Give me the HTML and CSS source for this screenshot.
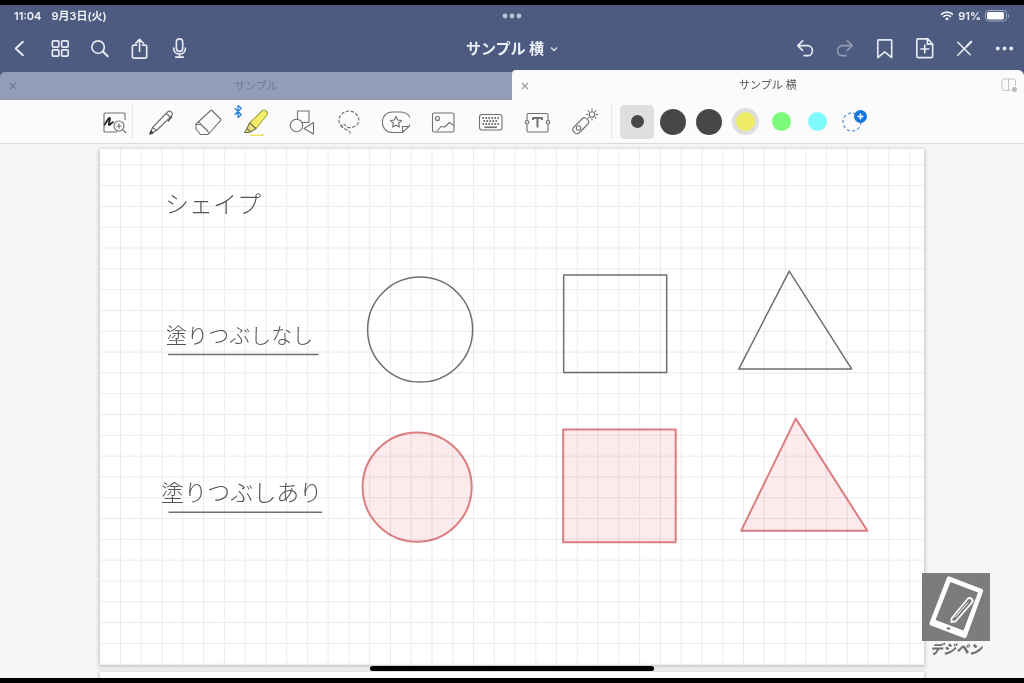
FILE: index.html
```html
<!DOCTYPE html>
<html lang="ja">
<head>
<meta charset="utf-8">
<meta name="viewport" content="width=device-width, initial-scale=1">
<title>サンプル 横</title>
<link rel="stylesheet" href="styles.css">
</head>
<body>
<div class="app">
  <header class="top">
    <div class="status">
      <div class="status-left"><span>11:04</span><span>9月3日(火)</span></div>
      <svg class="dots" viewBox="0 0 20 6" width="20" height="6"><circle cx="3" cy="3" r="2.400"/><circle cx="10" cy="3" r="2.400"/><circle cx="17" cy="3" r="2.400"/></svg>
      <div class="status-right">
        <svg viewBox="0 0 14 10" width="14" height="10" fill="none" stroke="#f4f6fa" stroke-width="1.700"><path d="M1 3.600C4.400.4 9.600.4 13 3.600M3.200 5.900c2.200-2 5.400-2 7.600 0"/><path d="M7 9.600 5 7.600c1.200-1 2.800-1 4 0z" fill="#f4f6fa" stroke="none"/></svg>
        <span>91%</span>
        <svg viewBox="0 0 25 12" width="25" height="12"><rect x=".5" y=".5" width="21" height="10.500" rx="3.200" fill="none" stroke="#a2abc2"/><rect x="2" y="2" width="17" height="7.500" rx="1.800" fill="#fff"/><path d="M23 4v4c1.500-.7 1.500-3.300 0-4z" fill="#a2abc2"/></svg>
      </div>
    </div>
    <nav class="nav">
      <div class="nav-group">
        <button class="nav-btn" aria-label="戻る"><svg class="ico" viewBox="0 0 24 24"><path d="M14.500 5 7 12l7.500 7" stroke-width="2"/></svg></button>
        <button class="nav-btn" aria-label="一覧"><svg class="ico" viewBox="0 0 24 24"><rect x="3.500" y="4" width="6.800" height="6.500" rx="1"/><rect x="13.200" y="4" width="6.800" height="6.500" rx="1"/><rect x="3.500" y="13.500" width="6.800" height="6.500" rx="1"/><rect x="13.200" y="13.500" width="6.800" height="6.500" rx="1"/></svg></button>
        <button class="nav-btn" aria-label="検索"><svg class="ico" viewBox="0 0 24 24"><circle cx="9.500" cy="10.500" r="6.500"/><path d="m14.500 15.200 5 4.800" stroke-width="2.200"/></svg></button>
        <button class="nav-btn" aria-label="共有"><svg class="ico" viewBox="0 0 24 24"><path d="M8 8.500H5.500a2 2 0 0 0-2 2V20a2 2 0 0 0 2 2h11a2 2 0 0 0 2-2v-9.500a2 2 0 0 0-2-2H14M11 15V3M7 6.500l4-4 4 4"/></svg></button>
        <button class="nav-btn" aria-label="録音"><svg class="ico" viewBox="0 0 24 24"><rect x="7.700" y="2" width="6.600" height="13" rx="3.300"/><path d="M4.800 11.500c0 8.500 12.400 8.500 12.400 0M11 18v3M7 21h8"/></svg></button>
      </div>
      <button class="title">サンプル 横<svg viewBox="0 0 8 6" width="8" height="6"><path d="m1 1.500 3 3 3-3" fill="none" stroke="#dfe3ed" stroke-width="1.300"/></svg></button>
      <div class="nav-group end">
        <button class="nav-btn" aria-label="元に戻す"><svg class="ico" viewBox="0 0 24 24"><path d="M10 4 5 9l5 5M5.500 9H15c7 0 7 10.500 0 10.500h-3.500"/></svg></button>
        <button class="nav-btn dim" aria-label="やり直す"><svg class="ico" viewBox="0 0 24 24"><path d="m15 4 5 5-5 5M19.500 9H10c-7 0-7 10.500 0 10.500h3.500"/></svg></button>
        <button class="nav-btn" aria-label="ブックマーク"><svg class="ico" viewBox="0 0 24 24"><path d="M6 3h12.500a1 1 0 0 1 1 1v17.500l-7.200-6-7.300 6V4a1 1 0 0 1 1-1z"/></svg></button>
        <button class="nav-btn" aria-label="ページを追加"><svg class="ico" viewBox="0 0 24 24"><path d="M5.500 2h10l5 5.500V20a1.500 1.500 0 0 1-1.500 1.500H5.500A1.500 1.500 0 0 1 4 20V3.500A1.500 1.500 0 0 1 5.500 2zM15 2v5.500h5.500M12.300 8.500v8M8.300 12.500h8"/></svg></button>
        <button class="nav-btn" aria-label="閉じる"><svg class="ico" viewBox="0 0 24 24"><path d="M5 5.500 18 18.500M19 5 5 19"/><path d="m14.500 9.500 4.500-4.500" stroke-width="2.300"/></svg></button>
        <button class="nav-btn" aria-label="その他"><svg class="ico solid" viewBox="0 0 24 24"><circle cx="5" cy="12" r="2"/><circle cx="12" cy="12" r="2"/><circle cx="19" cy="12" r="2"/></svg></button>
      </div>
    </nav>
    <div class="tabs">
      <div class="tab"><button class="tab-close" aria-label="タブを閉じる"><svg viewBox="0 0 8 8" width="8" height="8"><path d="m1 1 6 6M7 1 1 7"/></svg></button><span>サンプル</span></div>
      <div class="tab active"><button class="tab-close" aria-label="タブを閉じる"><svg viewBox="0 0 8 8" width="8" height="8"><path d="m1 1 6 6M7 1 1 7"/></svg></button><span>サンプル 横</span>
        <button class="tab-split" aria-label="分割表示"><svg viewBox="0 0 17 15" width="17" height="15" fill="none" stroke="#c4c4c6"><path d="M9.500 12.500H3a2 2 0 0 1-2-2V3a2 2 0 0 1 2-2h9.500a2 2 0 0 1 2 2v5M7.500 1v11.500"/><circle cx="13.500" cy="11.500" r="2.500" fill="#b9b9bb" stroke="none"/></svg></button>
      </div>
    </div>
  </header>

  <div class="tools">
    <button class="tool first" aria-label="拡大"><svg viewBox="0 0 28 28"><path d="M25 12V6a1 1 0 0 0-1-1H5a1 1 0 0 0-1 1v17a1 1 0 0 0 1 1h12"/><path d="M4 17c2-1 3-6 5.500-7 1.500 0-1.500 6-.5 7 1 .5 3-3 4.500-3" stroke="#222" stroke-width="1.900"/><circle cx="19" cy="18" r="5"/><path d="M19 15.500v5M16.500 18h5M22.600 21.600l3.500 3.400"/></svg></button>
    <button class="tool" aria-label="ペン"><svg viewBox="0 0 28 28"><path d="m3 26 2.500-6.500L20.500 4c2-2.500 6.500 1 4 4L9.500 22.500zM19.500 5.500l3.500 3.500M5.500 19.500l4 3"/><path d="m3 26 1-3 2 2zM25 8.500l-4 5" stroke="#333"/></svg></button>
    <button class="tool" aria-label="消しゴム"><svg viewBox="0 0 28 28"><path d="M18 2.500 26.500 11q.9.900 0 1.700L14 26.500H6.500L2 21v-5L16.700 2.500q.7-.7 1.300 0zM4.500 13.500l10.500 11.500M2 16.500h5l7 7"/></svg></button>
    <button class="tool marker" aria-label="蛍光ペン"><svg viewBox="0 0 28 28"><path d="m8.500 15 13-12.500c2-1.500 6.500 2 4.500 4.500L15 20.500z" fill="#f4ee6c" stroke="#aaa63e"/><path d="m8.500 15-2.500 5.500L9.500 24l5.500-3.500zM6 20.500 3.500 24.500h4l2-.5" fill="#e4df82" stroke="#76744a"/><path d="M9 27.300h14" stroke="#e8e260" stroke-width="1.500"/></svg><svg class="bt" viewBox="0 0 8 12"><path d="m1 3 6 6-3 2.500V.5L7 3 1 9"/></svg></button>
    <button class="tool" aria-label="図形"><svg viewBox="0 0 28 28"><rect x="9.500" y="3" width="11.500" height="11.500"/><circle cx="8.500" cy="17.500" r="6.200" fill="#fbfbfb"/><path d="m16 20.500 9.500-6V26z" fill="#fbfbfb"/></svg></button>
    <button class="tool" aria-label="なげなわ"><svg viewBox="0 0 28 28"><path d="M7.500 19.500C-.5 12 6.500 2.500 14.500 3s13 10 6 15c-4 2.500-9 2-10-.5-1.500-3-5-1-3 1.500s7 3 8 6.500" stroke-dasharray="3.500 1.500"/></svg></button>
    <button class="tool" aria-label="ステッカー"><svg viewBox="0 0 28 28"><path d="M20.500 24.500H10.500C-3 24.500-3 4 10.500 4h7C29 4 30.500 13 27.300 18zM20.500 24.500v-6H27"/><path d="m14 8.500 1.700 3.500 3.800.5-2.800 2.700.7 3.800-3.400-1.800-3.400 1.800.7-3.800-2.800-2.700 3.800-.5z"/></svg></button>
    <button class="tool" aria-label="画像"><svg viewBox="0 0 28 28"><rect x="3.500" y="5" width="21.500" height="19" rx="1.500"/><circle cx="8.500" cy="10.500" r="2"/><path d="m8 23 4-4.500 3.500.5 5-4.500 4.500 3"/></svg></button>
    <button class="tool" aria-label="キーボード"><svg viewBox="0 0 28 28"><rect x="3.500" y="6.500" width="22.500" height="15.500" rx="2.500"/><path d="M6.500 10H23M7.500 13h15M6.500 16H23" stroke-width="1.800" stroke-dasharray="1.600 1.400"/><path d="M8.500 19.300h12.500" stroke-width="1.600"/></svg></button>
    <button class="tool" aria-label="テキスト"><svg viewBox="0 0 28 28"><path d="M4 12V7a1.500 1.500 0 0 1 1.500-1.500h18A1.500 1.500 0 0 1 25 7v5M4 16.500V22.500a1.500 1.500 0 0 0 1.500 1.500h18a1.500 1.500 0 0 0 1.500-1.500v-6"/><circle cx="4" cy="14.300" r="1.700"/><circle cx="25" cy="14.300" r="1.700"/><path d="M10 12v-2h9v2M14.500 10v9.500" stroke-width="2"/></svg></button>
    <button class="tool" aria-label="レーザー"><svg viewBox="0 0 28 28"><path d="m3.500 19.500 9-9c2.500-2.500 8 2.500 5.500 5.500l-9 9c-3 2.500-8-2.500-5.500-5.500z"/><circle cx="8.500" cy="20" r="2.200"/><circle cx="22" cy="6.500" r="2.800"/><path d="M22 .5v2M22 10.500v2M16 6.500h2M26 6.500h2M17.800 2.300l1.300 1.300M24.900 9.400l1.300 1.300M26.200 2.300l-1.300 1.300M17.800 10.700l1.300-1.300"/></svg></button>
    <div class="swatches">
      <button class="swatch picked" aria-label="細"><i class="dot small"></i></button>
      <button class="swatch" aria-label="中"><i class="dot"></i></button>
      <button class="swatch" aria-label="太"><i class="dot"></i></button>
      <button class="swatch ring" aria-label="黄"><i class="dot color yellow"></i></button>
      <button class="swatch" aria-label="緑"><i class="dot color green"></i></button>
      <button class="swatch" aria-label="水色"><i class="dot color cyan"></i></button>
      <button class="swatch" aria-label="色を追加"><svg viewBox="0 0 28 28" width="28" height="28" fill="none"><circle cx="13" cy="14" r="9" stroke="#5b93d2" stroke-width="1.200" stroke-dasharray="3.200 2.200"/><circle cx="21.500" cy="8.500" r="6.500" fill="#1677e0"/><path d="M21.500 5.500v6M18.500 8.500h6" stroke="#fff" stroke-width="1.600"/></svg></button>
    </div>
  </div>

  <main class="stage">
    <svg class="sheet" viewBox="100 149 824 516">
      <defs>
        <pattern id="grid" x="100.200" y="144.500" width="20.760" height="20.800" patternUnits="userSpaceOnUse"><path d="M20.260 0V20.800M0 20.300H20.760" fill="none" stroke="#ebebeb" stroke-width="1"/></pattern>
      </defs>
      <rect x="100" y="149" width="824" height="516" fill="#fff"/>
      <g class="outline">
        <circle cx="420" cy="329.500" r="52.500"/>
        <rect x="563.500" y="275" width="103" height="97.500"/>
        <path d="M789 271 738.500 369H851.500z"/>
        <path d="M168 354.500H318.500M168.500 512H322"/>
      </g>
      <g class="filled">
        <circle cx="417" cy="487" r="54.500"/>
        <rect x="563" y="429.500" width="112.500" height="112.500"/>
        <path d="M795.500 418.500 741 530.500H867z"/>
      </g>
      <rect class="grid" x="100" y="149" width="824" height="516" fill="url(#grid)"/>
      <text class="hand large" x="165" y="213">シェイプ</text>
      <text class="hand" x="166" y="343">塗りつぶしなし</text>
      <text class="hand wide" x="161" y="501">塗りつぶしあり</text>
    </svg>
    <div class="sheet next"></div>
    <div class="logo">
      <svg viewBox="0 0 68 68"><rect width="68" height="68" fill="#7a7a7a"/><path d="M27.500 3.500 60 16q1.500.8 1 2.500L44.500 64q-.8 1.500-2.500 1L9 52.500Q7 51.500 7.500 50L25 4.500q.8-1.500 2.500-1z" fill="#fff"/><path d="M28.500 9 56 19.500 41.500 57.500 13.500 47z" fill="#7a7a7a"/><ellipse cx="26.500" cy="55.500" rx="2" ry="1.200" fill="#7a7a7a"/><path d="m29.500 45.500 16-19.500c2.500-2.500 6.500.5 4.500 3.500L33.500 48.500l-4 .5z" fill="#7a7a7a" stroke="#fff" stroke-width="1.800"/><path d="m33 44.500 13-15" stroke="#fff" stroke-width="1"/></svg>
      <span>デジペン</span>
    </div>
    <div class="home"></div>
  </main>
</div>
</body>
</html>
```
FILE: styles.css
```css
* { box-sizing: border-box; }
body {
  margin: 0;
  background: #000;
  font-family: Inter, "Noto Sans CJK JP", sans-serif;
}
button {
  border: 0;
  padding: 0;
  background: none;
  font: inherit;
  color: inherit;
}
.app {
  height: 100vh;
  padding: 5px 0;
  display: flex;
  flex-direction: column;
}
.top { background: #4e5b80; color: #eef1f7; }
.status {
  height: 22px;
  padding: 0 14px;
  display: grid;
  grid-template-columns: 1fr auto 1fr;
  align-items: center;
  font-size: 11px;
  line-height: 16px;
  font-weight: 600;
}
.status-left { display: flex; gap: 10px; }
.status-right { display: flex; gap: 4px; align-items: center; justify-content: flex-end; }
.dots { fill: #b9c1d5; }
.nav {
  height: 43px;
  display: grid;
  grid-template-columns: 1fr auto 1fr;
  align-items: center;
}
.nav-group { display: flex; }
.end { justify-content: flex-end; }
.nav-btn { width: 40px; height: 40px; display: grid; place-items: center; }
.dim { opacity: 0.45; }
.ico {
  width: 23px;
  height: 23px;
  fill: none;
  stroke: #e6eaf3;
  stroke-width: 1.7;
  stroke-linecap: round;
  stroke-linejoin: round;
}
.solid { fill: #e6eaf3; stroke: none; }
.title {
  display: flex;
  align-items: center;
  gap: 6px;
  font-size: 15px;
  line-height: 20px;
  font-weight: 700;
}
.tabs { display: grid; grid-template-columns: 1fr 1fr; align-items: end; }
.tab {
  position: relative;
  height: 28px;
  display: flex;
  align-items: center;
  justify-content: center;
  background: #939db8;
  border-radius: 5px 0 0 0;
  color: #6f7995;
  font-size: 11px;
  line-height: 16px;
}
.tab.active {
  height: 30px;
  background: #fbfbfb;
  border-radius: 4px 6px 0 0;
  color: #555;
}
.tab-close { position: absolute; left: 9px; top: 10px; width: 8px; height: 8px; display: flex; }
.tab-close path { stroke: #707a95; stroke-width: 1.1; }
.active .tab-close path { stroke: #999; }
.active .tab-close { top: 12px; }
.tab-split { position: absolute; right: 6px; top: 8px; display: flex; }
.tools {
  height: 44px;
  padding-left: 90px;
  display: flex;
  align-items: center;
  background: #fbfbfb;
  border-bottom: 1px solid #d9d9d9;
}
.tool {
  position: relative;
  width: 47px;
  height: 34px;
  flex: none;
  display: grid;
  place-items: center;
}
.tool svg {
  width: 28px;
  height: 28px;
  fill: none;
  stroke: #707070;
  stroke-width: 1.1;
  stroke-linejoin: round;
}
.first { background: linear-gradient(#e6e6e6, #e6e6e6) 42px 0 / 1px 100% no-repeat; }
.tool .bt {
  position: absolute;
  left: 2px;
  top: 0;
  width: 10px;
  height: 13px;
  stroke: #2583e2;
  stroke-width: 1.2;
}
.swatches {
  margin-left: 4px;
  padding-left: 7px;
  height: 34px;
  display: flex;
  align-items: center;
  border-left: 1px solid #e8e8e8;
}
.swatch { width: 36px; height: 34px; display: grid; place-items: center; }
.picked { background: #dfdfdf; background-clip: content-box; padding: 0 1px; border-radius: 5px; }
.dot { width: 26px; height: 26px; border-radius: 50%; background: #474747; }
.small { width: 13px; height: 13px; }
.color { width: 19px; height: 19px; }
.ring .dot { box-shadow: 0 0 0 4px #dedede; }
.yellow { background: #eeeb67; }
.green { background: #7cfb7a; }
.cyan { background: #80fbfd; }
.stage {
  position: relative;
  flex: 1;
  min-height: 0;
  overflow: hidden;
  padding-top: 5px;
  display: flex;
  flex-direction: column;
  align-items: center;
  gap: 7px;
  background: #f6f6f6;
}
.sheet {
  display: block;
  flex: none;
  width: 80.5%;
  background: #fff;
  box-shadow: 0 1px 4px 1px #c4c4c4;
}
.next { height: 40px; }
.outline { fill: none; stroke: #707070; stroke-width: 1.5; stroke-linejoin: round; }
.filled { fill: #fdeaec; stroke: #dc7f84; stroke-width: 2; stroke-linejoin: round; }
.grid { mix-blend-mode: multiply; }
.hand {
  font-family: "Noto Sans CJK JP", sans-serif;
  font-size: 21px;
  font-weight: 300;
  fill: #555;
}
.large { font-size: 24px; }
.wide { font-size: 23px; }
.logo {
  position: absolute;
  right: 34px;
  bottom: 20px;
  width: 68px;
  display: flex;
  flex-direction: column;
  align-items: center;
  color: #6f6f6f;
  font-size: 13px;
  line-height: 17px;
  font-weight: 900;
  font-style: italic;
}
.logo svg { display: block; width: 68px; height: 68px; opacity: 0.98; }
.home {
  position: absolute;
  left: 50%;
  bottom: 7px;
  width: 284px;
  height: 5px;
  transform: translateX(-50%);
  border-radius: 3px;
  background: #000;
}
```
